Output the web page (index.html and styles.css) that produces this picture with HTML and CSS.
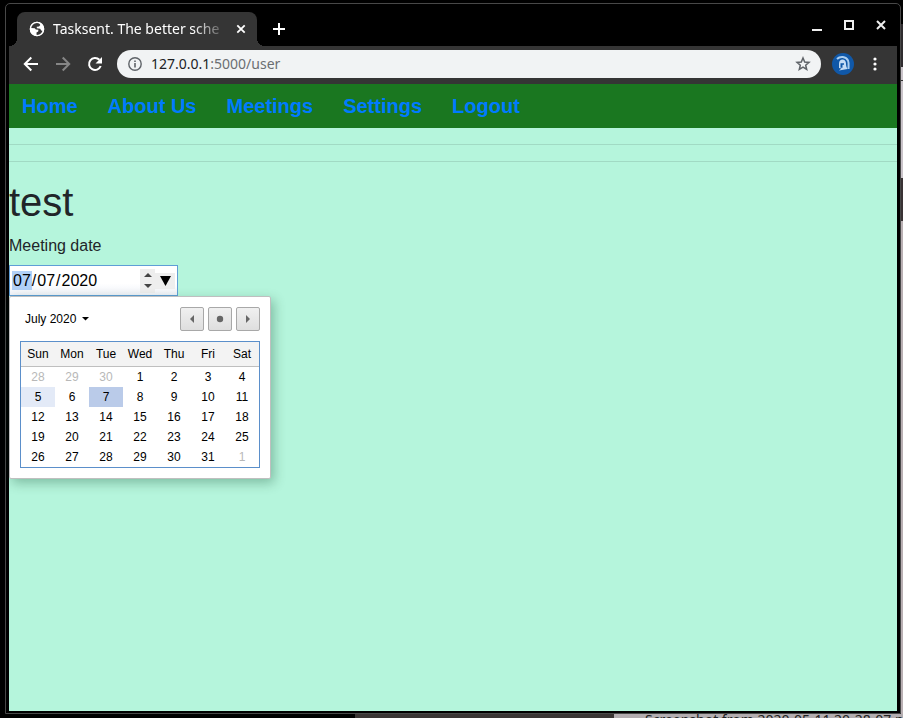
FILE: index.html
```html
<!DOCTYPE html>
<html lang="en-US">
<head>
<meta charset="utf-8">
<meta name="viewport" content="width=device-width, initial-scale=1">
<title>Tasksent. The better sche</title>
<link rel="stylesheet" href="styles.css">
</head>
<body>
<div class="window">
  <header class="tabstrip">
    <div class="tab">
      <svg class="globe" viewBox="0 0 16 16" aria-hidden="true"><circle cx="8" cy="8" r="7.2" fill="#fff"/><path d="M7 1.6C4 1.8 2 4 1.6 7l4.200 .2 1 1.300 2.600 .2-.2 1.800-1.700 1-.2 3c3 .3 5.800-1.700 6.700-4.500l-1.800-.4-1-1.800-3.400-.6V5.700l2.200-.2 1.300-1.600-1.200-1.900z" fill="#353535"/><circle cx="8" cy="8" r="6.600" fill="none" stroke="#fff" stroke-width="1.400"/><path d="M1.500 7.500l4 .5 1.300 2.200.7 4.300C4 14 1.500 11 1.500 7.500z" fill="#fff"/></svg>
      <span class="tab-title">Tasksent. The better sche</span>
      <button class="tab-close" aria-label="Close tab"><svg viewBox="0 0 10 10"><path d="M1.300 1.300l7.400 7.400M8.700 1.300L1.300 8.700" stroke="#fff" stroke-width="1.800"/></svg></button>
    </div>
    <button class="new-tab" aria-label="New tab"><svg viewBox="0 0 12 12"><path d="M6 0v12M0 6h12" stroke="#fff" stroke-width="2"/></svg></button>
    <div class="window-controls">
      <button aria-label="Minimize"><svg viewBox="0 0 12 12"><path d="M1 11h10" stroke="#eee" stroke-width="2"/></svg></button>
      <button aria-label="Maximize"><svg viewBox="0 0 12 12"><path d="M2 2h8v8H2z" fill="none" stroke="#eee" stroke-width="2"/></svg></button>
      <button aria-label="Close"><svg viewBox="0 0 12 12"><path d="M2 2l8 8M10 2l-8 8" stroke="#eee" stroke-width="2"/></svg></button>
    </div>
  </header>
  <div class="toolbar">
    <button class="tool" aria-label="Back"><svg viewBox="0 0 16 16"><path d="M15 8H2M8.300 1.500L1.800 8l6.500 6.500" fill="none" stroke="#fff" stroke-width="2"/></svg></button>
    <button class="tool" aria-label="Forward"><svg viewBox="0 0 16 16"><path d="M1 8h13M7.700 1.500L14.200 8l-6.500 6.500" fill="none" stroke="#868686" stroke-width="2"/></svg></button>
    <button class="tool" aria-label="Reload"><svg viewBox="0 0 16 16"><path d="M13.700 10A6 6 0 1 1 12.400 3.800" fill="none" stroke="#fff" stroke-width="2"/><path d="M15 1v6.500H8.500z" fill="#fff"/></svg></button>
    <div class="omnibox">
      <svg class="info" viewBox="0 0 14 14" aria-hidden="true"><circle cx="7" cy="7" r="6.200" fill="none" stroke="#5f6368" stroke-width="1.400"/><path d="M7 6v4.500M7 3.400v1.600" stroke="#5f6368" stroke-width="1.600"/></svg>
      <div class="url">127.0.0.1<span class="path">:5000/user</span></div>
      <button class="star" aria-label="Bookmark"><svg viewBox="0 0 16 16"><path d="M8 2l1.700 4 4.300.4-3.300 2.800 1 4.300L8 11.200l-3.700 2.300 1-4.300L2 6.400 6.300 6z" fill="none" stroke="#5f6368" stroke-width="1.500"/></svg></button>
    </div>
    <button class="profile" aria-label="Profile"><svg viewBox="0 0 22 22"><circle cx="11" cy="11" r="11" fill="#1058a8"/><path d="M5 6C8 3 14 3.200 16 7.500c1.200 3 .4 6 .5 8.500" fill="none" stroke="#a9cdf0" stroke-width="2"/><path d="M7 15V10.500C7 5 14 5 14 10.500c0 2 .3 3.500 1.500 5.500l-8.500 1.500 2.500-2z" fill="#c4dcf5"/><path d="M8.500 10.200h3.500v1.600h-1.500v3H8.500z" fill="#1058a8"/></svg></button>
    <button class="more" aria-label="Menu"><svg viewBox="0 0 4 14"><circle cx="2" cy="2" r="1.600" fill="#fff"/><circle cx="2" cy="7" r="1.600" fill="#fff"/><circle cx="2" cy="12" r="1.600" fill="#fff"/></svg></button>
  </div>
  <main class="page">
    <nav class="nav">
      <a href="#">Home</a><a href="#">About Us</a><a href="#">Meetings</a><a href="#">Settings</a><a href="#">Logout</a>
    </nav>
    <hr><hr>
    <h1>test</h1>
    <label for="meeting-date">Meeting date</label>
    <div class="date-field">
      <input id="meeting-date" type="date" value="2020-07-07">
      <div class="spinner">
        <button aria-label="Increase"><svg viewBox="0 0 8 4"><path d="M0 4l4-4 4 4z" fill="#444"/></svg></button>
        <button aria-label="Decrease"><svg viewBox="0 0 8 4"><path d="M0 0l4 4 4-4z" fill="#444"/></svg></button>
      </div>
      <button class="open" aria-label="Open calendar"><svg viewBox="0 0 12 10"><path d="M1 0h11L6.500 10z" fill="#000"/></svg></button>
      <div class="calendar">
        <div class="calendar-head">
          <button class="month">July 2020<svg viewBox="0 0 8 4"><path d="M0 0h8L4 4z" fill="#000"/></svg></button>
          <button class="step" aria-label="Previous month"><svg viewBox="0 0 8 8"><path d="M6 0v8L2 4z" fill="#666"/></svg></button>
          <button class="step" aria-label="Today"><svg viewBox="0 0 8 8"><circle cx="4" cy="4" r="3.200" fill="#666"/></svg></button>
          <button class="step" aria-label="Next month"><svg viewBox="0 0 8 8"><path d="M2 0v8l4-4z" fill="#666"/></svg></button>
        </div>
        <table>
          <thead><tr><th>Sun</th><th>Mon</th><th>Tue</th><th>Wed</th><th>Thu</th><th>Fri</th><th>Sat</th></tr></thead>
          <tbody>
            <tr><td class="out">28</td><td class="out">29</td><td class="out">30</td><td>1</td><td>2</td><td>3</td><td>4</td></tr>
            <tr><td class="hint">5</td><td>6</td><td class="selected">7</td><td>8</td><td>9</td><td>10</td><td>11</td></tr>
            <tr><td>12</td><td>13</td><td>14</td><td>15</td><td>16</td><td>17</td><td>18</td></tr>
            <tr><td>19</td><td>20</td><td>21</td><td>22</td><td>23</td><td>24</td><td>25</td></tr>
            <tr><td>26</td><td>27</td><td>28</td><td>29</td><td>30</td><td>31</td><td class="out">1</td></tr>
          </tbody>
        </table>
      </div>
    </div>
  </main>
</div>
<div class="behind"><span>Screenshot from 2020-05-11 20-28-07.p</span></div>
</body>
</html>
```
FILE: styles.css
```css
* { box-sizing: border-box; }

body {
  margin: 0;
  height: 100vh;
  overflow: hidden;
  display: flex;
  flex-direction: column;
  font-family: "Liberation Sans", Arial, sans-serif;
  background:
    linear-gradient(#000 24px, #2f2c2f 24px 67px, #c9c3c9 67px 80px, #333 80px 81px, #c9c3c9 81px 178px, #3a3335 178px 221px, #b9b0b3 221px) right / 2px 100% no-repeat,
    #000;
}

button {
  display: flex;
  align-items: center;
  justify-content: center;
  padding: 0;
  border: 0;
  background: none;
  color: inherit;
  font: inherit;
}

svg { display: block; flex: none; }

.window {
  flex: 1;
  display: flex;
  flex-direction: column;
  margin: 3px 2px 0 5px;
  padding: 0 3px 2px;
  border: 1px solid #484848;
  border-radius: 5px 5px 0 0;
  background: #000;
}

.behind {
  height: 4px;
  overflow: hidden;
  padding-left: 645px;
  background: linear-gradient(90deg, #000 355px, #3a3534 355px 614px, #b3adb0 614px);
  color: #222;
  font: 14px/12px "Noto Sans", sans-serif;
  white-space: nowrap;
}

.tabstrip {
  display: flex;
  padding: 8px 10px 0 8px;
}

.tab {
  position: relative;
  display: flex;
  align-items: center;
  width: 240px;
  height: 34px;
  padding: 0 11px 0 12px;
  border-radius: 8px 8px 0 0;
  background: #353535;
  color: #fff;
}

.tab::before,
.tab::after {
  content: "";
  position: absolute;
  bottom: 0;
  width: 8px;
  height: 8px;
}

.tab::before {
  left: -8px;
  background: radial-gradient(circle at 0 0, #000 8px, #353535 8px);
}

.tab::after {
  right: -8px;
  background: radial-gradient(circle at 100% 0, #000 8px, #353535 8px);
}

.globe { width: 16px; }

.tab-title {
  flex: 1;
  margin: 0 8px;
  white-space: nowrap;
  font: 14px/20px "Noto Sans", sans-serif;
  -webkit-mask-image: linear-gradient(90deg, #000 80%, transparent);
  mask-image: linear-gradient(90deg, #000 80%, transparent);
}

.tab-close svg { width: 10px; }

.new-tab {
  width: 44px;
  height: 34px;
}

.new-tab svg { width: 12px; }

.window-controls {
  display: flex;
  gap: 20px;
  height: 26px;
  margin-left: auto;
}

.window-controls svg { width: 12px; }

.toolbar {
  display: flex;
  align-items: center;
  height: 38px;
  padding: 0 12px 2px 14px;
  background: #353535;
}

.tool {
  width: 16px;
  margin-right: 16px;
}

.tool svg { width: 16px; }

.omnibox {
  flex: 1;
  display: flex;
  align-items: center;
  height: 28px;
  margin-left: -2px;
  margin-right: 11px;
  padding: 0 10px 0 11px;
  border-radius: 14px;
  background: #f1f3f4;
  color: #202124;
  font: 14px/20px "Noto Sans", sans-serif;
}

.info { width: 14px; margin-right: 9px; }
.url { flex: 1; }
.path { color: #6b6e72; }
.star svg { width: 16px; }
.profile svg { width: 22px; }
.more { width: 20px; margin-left: 11px; }
.more svg { width: 4px; }

.page {
  flex: 1;
  background: #b5f5dc;
  color: #212529;
  font-size: 16px;
  line-height: 24px;
}

.nav {
  display: flex;
  gap: 30px;
  padding: 7px 13px;
  background: #1a7720;
  font-size: 20px;
  line-height: 30px;
  font-weight: bold;
}

.nav a {
  color: #007bff;
  text-decoration: none;
}

hr {
  height: 1px;
  margin: 16px 0;
  border: 0;
  background: #a1dac4;
}

h1 {
  margin: 0 0 8px;
  font-size: 40px;
  line-height: 48px;
  font-weight: normal;
}

label { display: block; margin-bottom: 7px; }

.date-field {
  position: relative;
  display: flex;
  align-items: center;
  width: 169px;
  height: 31px;
  padding-right: 2px;
  border: 1px solid #5e9ed6;
  background: linear-gradient(#fff 60%, #eff2f8);
}

.date-field input {
  flex: 1;
  min-width: 0;
  height: 100%;
  padding: 0 2px;
  border: 0;
  outline: 0;
  background: linear-gradient(#b1d0f7, #b1d0f7) 2px 5px / 20px 19px no-repeat;
  color: #000;
  font: 16px/24px "Liberation Sans", sans-serif;
}

.date-field input::-webkit-calendar-picker-indicator { display: none; }

.spinner {
  display: flex;
  flex-direction: column;
  align-items: center;
  justify-content: center;
  gap: 7px;
  width: 15px;
  height: 24px;
  background: #eee;
}

.spinner svg { width: 8px; }

.open {
  width: 20px;
  height: 16px;
  background: #eee;
}

.open svg { width: 12px; }

.calendar {
  position: absolute;
  top: 30px;
  left: -1px;
  width: 262px;
  padding: 10px;
  border: 1px solid #bfbfbf;
  border-radius: 2px;
  background: #fff;
  box-shadow: 3px 4px 12px rgba(0, 60, 30, .3);
  color: #000;
  font-size: 12px;
  line-height: 20px;
}

.calendar-head {
  display: flex;
  gap: 4px;
  margin-bottom: 10px;
}

.month { gap: 6px; margin: 0 auto 0 5px; }
.month svg { width: 7px; }

.step {
  width: 24px;
  height: 24px;
  border: 1px solid #a8a8a8;
  border-radius: 2px;
  background: linear-gradient(#f0f0f0, #dedede);
}

.step svg { width: 8px; }

table {
  width: 100%;
  table-layout: fixed;
  border-spacing: 0;
  border: 1px solid #5b8fca;
}

th, td {
  height: 20px;
  padding: 0;
  text-align: center;
  font-weight: normal;
}

th {
  height: 25px;
  border-bottom: 1px solid #bfbfbf;
  background: #f3f3f3;
}

.out { color: #b8b8b8; }
.hint { background: #e3eaf7; }
.selected { background: #bacbe9; }
```
